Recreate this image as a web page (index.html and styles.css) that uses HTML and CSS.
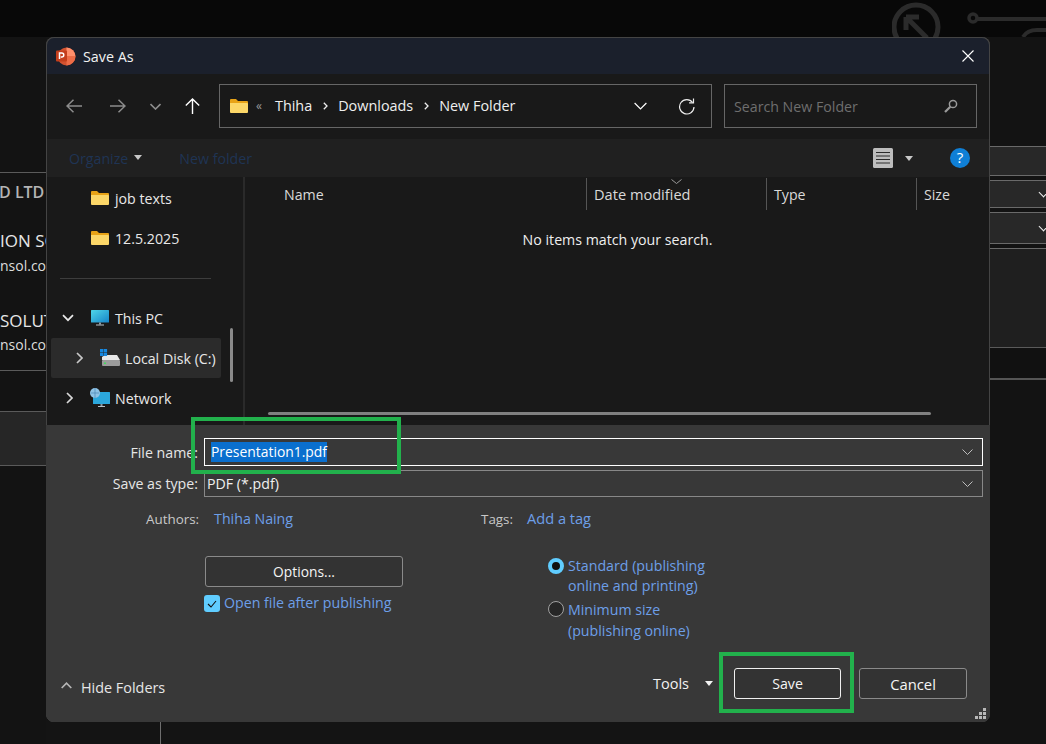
FILE: index.html
```html
<!DOCTYPE html>
<html lang="en">
<head>
<meta charset="utf-8">
<title>Save As</title>
<link rel="stylesheet" href="styles.css">
</head>
<body>
<div class="desktop">
  <header class="app-top">
    <svg class="app-logo" width="160" height="37" viewBox="0 0 160 37" fill="none" stroke="#2b2b2b">
      <circle cx="24" cy="27" r="22" stroke-width="5"/>
      <path d="M14 17v13M14 17h13M15 18l20 20" stroke-width="5"/>
      <circle cx="81" cy="18" r="4" stroke-width="3.5"/>
      <path d="M85 19h75" stroke-width="4"/>
      <path d="M131 37c3-5 8-7 14-7h15" stroke-width="4"/>
    </svg>
  </header>
  <div class="app-body">
    <aside class="app-left">
      <div class="left-head"></div>
      <div class="left-list">
        <div class="lt lt-gray lt-a">D LTD</div>
        <div class="lt lt-white lt-b">ION SOL</div>
        <div class="lt lt-small lt-c">nsol.com</div>
        <div class="lt lt-white lt-d">SOLUT</div>
        <div class="lt lt-small lt-e">nsol.com</div>
      </div>
      <div class="left-gap"></div>
      <div class="left-band"></div>
    </aside>
    <div class="app-mid"><div class="mid-line"></div></div>
    <aside class="app-right">
      <div class="r-gap r-g1"></div>
      <div class="r-field r-f1"></div>
      <div class="r-field r-f2"><span class="r-chev"></span></div>
      <div class="r-field r-f3"><span class="r-chev"></span></div>
      <div class="r-field r-f4"></div>
      <div class="r-f5"></div>
    </aside>
  </div>

  <section class="dialog">
    <div class="titlebar">
      <svg class="ppt" width="20" height="19" viewBox="0 0 20 19">
        <circle cx="10.5" cy="9.5" r="9" fill="#d35230"/>
        <path d="M10.5 .5a9 9 0 0 1 9 9h-9z" fill="#ff8f6b"/>
        <path d="M10.5 9.5h9a9 9 0 0 1-9 9z" fill="#ed6c47"/>
        <rect x="0" y="3.5" width="11" height="11" rx="1" fill="#c43e1c"/>
        <path d="M3.5 12V6h2.3a1.9 1.9 0 0 1 0 3.9H4.8" fill="none" stroke="#fff" stroke-width="1.5"/>
      </svg>
      <span class="title-text">Save As</span>
      <svg class="close" width="12" height="12" viewBox="0 0 12 12"><path d="M.5.5l11 11M11.5.5l-11 11" stroke="#fff" stroke-width="1.1"/></svg>
    </div>

    <div class="toolbar">
      <svg class="nav nav-back" width="16" height="14" viewBox="0 0 16 14" fill="none" stroke="#8c8c8c" stroke-width="1.5"><path d="M16 7H1M7.5.7L1 7l6.5 6.3"/></svg>
      <svg class="nav nav-fwd" width="16" height="14" viewBox="0 0 16 14" fill="none" stroke="#8c8c8c" stroke-width="1.5"><path d="M0 7h15M8.5.7L15 7l-6.500 6.300"/></svg>
      <svg class="nav nav-down" width="11" height="7" viewBox="0 0 11 7" fill="none" stroke="#8c8c8c" stroke-width="1.600"><path d="M.5 1l5 5 5-5"/></svg>
      <svg class="nav nav-up" width="15" height="16" viewBox="0 0 15 16" fill="none" stroke="#fff" stroke-width="1.400"><path d="M7.500 16V1M.8 7.500L7.500 1l6.700 6.500"/></svg>
      <div class="address">
        <svg class="folder" width="18" height="14" viewBox="0 0 18 14"><path d="M0 1a1 1 0 0 1 1-1h5l2 2h9a1 1 0 0 1 1 1v2H0z" fill="#e8a317"/><path d="M0 4h17a1 1 0 0 1 1 1v8a1 1 0 0 1-1 1H1a1 1 0 0 1-1-1z" fill="#fcd768"/></svg>
        <span class="dbl">«</span>
        <span class="crumb">Thiha</span>
        <svg class="crumb-sep" width="5" height="8" viewBox="0 0 5 8" fill="none" stroke="#eee" stroke-width="1.300"><path d="M.8.8L4 4 .8 7.200"/></svg>
        <span class="crumb">Downloads</span>
        <svg class="crumb-sep" width="5" height="8" viewBox="0 0 5 8" fill="none" stroke="#eee" stroke-width="1.300"><path d="M.8.8L4 4 .8 7.200"/></svg>
        <span class="crumb">New Folder</span>
        <svg class="addr-chev" width="13" height="8" viewBox="0 0 13 8" fill="none" stroke="#fff" stroke-width="1.200"><path d="M.6 1l5.900 6 5.900-6"/></svg>
        <svg class="refresh" width="17" height="17" viewBox="0 0 17 17" fill="none" stroke="#eee" stroke-width="1.200"><path d="M14.600 4.500A7.200 7.200 0 1 0 16 9"/><path d="M15.500 .5v4.400h-4.400"/></svg>
      </div>
      <div class="search">
        <span class="search-text">Search New Folder</span>
        <svg width="14" height="14" viewBox="0 0 14 14" fill="none" stroke="#9a9a9a" stroke-width="1.500"><circle cx="9" cy="5" r="3.600"/><path d="M6.300 7.700L1 13" stroke-width="2.200"/></svg>
      </div>
    </div>

    <div class="cmdbar">
      <span class="cmd-dim">Organize</span>
      <span class="caret cmd-caret"></span>
      <span class="cmd-dim cmd-new">New folder</span>
      <svg class="view" width="20" height="20" viewBox="0 0 20 20"><rect width="20" height="20" rx="1.500" fill="#bdbdbd"/><path d="M3 4.500h14M3 8h14M3 11.500h14M3 15h14" stroke="#2b2b2b"/></svg>
      <span class="caret view-caret"></span>
      <svg class="help" width="20" height="20" viewBox="0 0 20 20"><circle cx="10" cy="10" r="10" fill="#0f7fd6"/><text x="10" y="15" text-anchor="middle" class="help-q">?</text></svg>
    </div>

    <div class="browser">
      <nav class="tree">
        <div class="tree-list">
          <div class="row row-l2"><svg class="folder" width="18" height="14" viewBox="0 0 18 14"><path d="M0 1a1 1 0 0 1 1-1h5l2 2h9a1 1 0 0 1 1 1v2H0z" fill="#e8a317"/><path d="M0 4h17a1 1 0 0 1 1 1v8a1 1 0 0 1-1 1H1a1 1 0 0 1-1-1z" fill="#fcd768"/></svg><span>job texts</span></div>
          <div class="row row-l2"><svg class="folder" width="18" height="14" viewBox="0 0 18 14"><path d="M0 1a1 1 0 0 1 1-1h5l2 2h9a1 1 0 0 1 1 1v2H0z" fill="#e8a317"/><path d="M0 4h17a1 1 0 0 1 1 1v8a1 1 0 0 1-1 1H1a1 1 0 0 1-1-1z" fill="#fcd768"/></svg><span>12.5.2025</span></div>
          <div class="row-sep"><hr></div>
          <div class="row row-top">
            <svg class="tw-open" width="12" height="8" viewBox="0 0 12 8" fill="none" stroke="#e8e8e8" stroke-width="1.700"><path d="M1 1.200l5 5 5-5"/></svg>
            <svg class="pc" width="18" height="16" viewBox="0 0 18 16"><defs><linearGradient id="pcg" x1="0" y1="0" x2="1" y2="1"><stop offset="0" stop-color="#4fd6e8"/><stop offset="1" stop-color="#1684c9"/></linearGradient></defs><rect width="18" height="12.500" rx=".5" fill="url(#pcg)"/><rect x="8" y="12.500" width="2" height="2" fill="#8a9aa5"/><rect x="5" y="14.500" width="8" height="1" fill="#b9c2c8"/></svg>
            <span>This PC</span>
          </div>
          <div class="row row-sel">
            <svg class="tw" width="7" height="12" viewBox="0 0 7 12" fill="none" stroke="#c8c8c8" stroke-width="1.700"><path d="M1 1l5 5-5 5"/></svg>
            <svg class="disk" width="20" height="18" viewBox="0 0 20 18"><path d="M2 8l3-2h12l3 5H2z" fill="#e8e8e8"/><rect x="2" y="11" width="18" height="6" rx="1" fill="#9b9b9b"/><rect x="4" y="13.500" width="2" height="1.500" fill="#3fdc5a"/><path d="M0 0h3.300v3.300H0zM3.800 0h3.300v3.300H3.800zM0 3.800h3.300v3.300H0zM3.800 3.800h3.300v3.300H3.800z" fill="#1788e0"/></svg>
            <span>Local Disk (C:)</span>
          </div>
          <div class="row row-top">
            <svg class="tw tw-net" width="7" height="12" viewBox="0 0 7 12" fill="none" stroke="#d8d8d8" stroke-width="1.700"><path d="M1 1l5 5-5 5"/></svg>
            <svg class="net" width="20" height="20" viewBox="0 0 20 20"><rect x="3" y="4" width="17" height="12" rx=".5" fill="#2ba7dc"/><rect x="10.500" y="16" width="2" height="2" fill="#8a9aa5"/><rect x="8" y="18" width="7" height="1" fill="#b9c2c8"/><circle cx="5" cy="5" r="5" fill="#8fc3e6"/><path d="M1 5h8M5 0v10" stroke="#4b86b5" stroke-width=".7"/></svg>
            <span>Network</span>
          </div>
        </div>
        <div class="tree-scroll"></div>
      </nav>
      <div class="pane">
        <div class="cols">
          <span class="col col-name">Name</span>
          <span class="col col-date">Date modified<svg class="sort" width="11" height="5" viewBox="0 0 11 5" fill="none" stroke="#9a9a9a"><path d="M.5.5l5 4 5-4"/></svg></span>
          <span class="col col-type">Type</span>
          <span class="col col-size">Size</span>
        </div>
        <p class="empty">No items match your search.</p>
        <div class="hscroll"></div>
      </div>
    </div>

    <div class="form">
      <div class="field">
        <label class="f-label">File name:</label>
        <div class="combo combo-focus"><span class="sel">Presentation1.pdf</span><svg class="combo-chev" width="11" height="6" viewBox="0 0 11 6" fill="none" stroke="#bdbdbd"><path d="M.5.5l5 5 5-5"/></svg></div>
      </div>
      <div class="field field-2">
        <label class="f-label">Save as type:</label>
        <div class="combo combo-type"><span>PDF (*.pdf)</span><svg class="combo-chev" width="11" height="6" viewBox="0 0 11 6" fill="none" stroke="#bdbdbd"><path d="M.5.5l5 5 5-5"/></svg></div>
      </div>
      <div class="meta">
        <span class="meta-label">Authors:</span><span class="link link-author">Thiha Naing</span>
        <span class="meta-label meta-tags">Tags:</span><span class="link link-tag">Add a tag</span>
      </div>
      <div class="opts">
        <div class="opts-left">
          <button class="btn btn-options">Options...</button>
          <div class="check"><span class="box"><svg width="10" height="8" viewBox="0 0 10 8" fill="none" stroke="#111" stroke-width="1.100"><path d="M1 4l3 3 5-6"/></svg></span><span class="link">Open file after publishing</span></div>
        </div>
        <div class="opts-right">
          <div class="radio"><span class="dot dot-on"></span><span class="link">Standard (publishing<br>online and printing)</span></div>
          <div class="radio radio-2"><span class="dot"></span><span class="link">Minimum size<br>(publishing online)</span></div>
        </div>
      </div>
      <div class="actions">
        <svg class="hide-chev" width="11" height="7" viewBox="0 0 11 7" fill="none" stroke="#b5b5b5" stroke-width="1.700"><path d="M.7 6l4.800-4.800L10.300 6"/></svg>
        <span class="hide-text">Hide Folders</span>
        <span class="tools">Tools</span>
        <span class="caret tools-caret"></span>
        <button class="btn btn-save">Save</button>
        <button class="btn btn-cancel">Cancel</button>
      </div>
      <svg class="grip" width="12" height="12" viewBox="0 0 12 12" fill="#b8b8b8"><path d="M8 0h3v3H8zM4 4h3v3H4zM8 4h3v3H8zM0 8h3v3H0zM4 8h3v3H4zM8 8h3v3H8z"/></svg>
    </div>

    <div class="mark mark-name"></div>
    <div class="mark mark-save"></div>
  </section>
</div>
</body>
</html>
```

FILE: styles.css
```css
* { box-sizing: border-box; }
html, body { margin: 0; height: 100%; }
body { background: #141414; font-family: "Open Sans", "Noto Sans", sans-serif; font-size: 14.2px; color: #eee; overflow: hidden; }

.desktop { position: relative; width: 1046px; height: 744px; overflow: hidden; display: flex; flex-direction: column; }

/* background application */
.app-top { height: 37px; background: #080808; flex: none; display: flex; justify-content: flex-end; overflow: hidden; }
.app-logo { flex: none; margin-right: -6px; }
.app-body { flex: 1; display: flex; }
.app-left { width: 46px; flex: none; overflow: hidden; display: flex; flex-direction: column; background: #131313; }
.left-head { height: 136px; border-bottom: 1px solid #5a5a5a; flex: none; }
.left-list { height: 198px; border-bottom: 1px solid #5a5a5a; flex: none; overflow: hidden; }
.lt { white-space: nowrap; }
.lt-gray { font-size: 16px; font-weight: 600; color: #b4b4b4; line-height: 22px; margin: 8px 0 0 -1px; }
.lt-white { font-size: 17px; color: #e6e6e6; line-height: 22px; }
.lt-small { font-size: 14px; color: #ddd; line-height: 20px; }
.lt-b { margin: 27px 0 0 0; }
.lt-c { margin: 4px 0 0 0; }
.lt-d { margin: 34px 0 0 0; }
.lt-e { margin: 3px 0 0 0; }
.left-gap { height: 41px; border-bottom: 1px solid #5a5a5a; flex: none; }
.left-band { height: 54px; background: #262626; border-bottom: 1px solid #5a5a5a; flex: none; }
.app-mid { flex: 1; display: flex; align-items: flex-end; }
.mid-line { width: 1px; height: 22px; background: #6e6e6e; margin-left: 114px; }
.app-right { width: 56px; flex: none; display: flex; flex-direction: column; background: #131313; }
.r-g1 { height: 109px; flex: none; }
.r-field { background: #282828; border-top: 1px solid #6a6a6a; border-bottom: 1px solid #6a6a6a; flex: none; position: relative; display: flex; align-items: center; justify-content: flex-end; }
.r-f1 { height: 30px; margin-bottom: 4px; }
.r-f2 { height: 28px; margin-bottom: 4px; }
.r-f3 { height: 32px; margin-bottom: 4px; }
.r-f4 { height: 100px; border-bottom: 1px solid #5a5a5a; background: #1f1f1f; }
.r-f5 { height: 32px; border-bottom: 2px solid #555; background: #111; flex: none; }
.r-chev { width: 7px; height: 7px; border-right: 1.500px solid #eee; border-bottom: 1.500px solid #eee; transform: rotate(45deg); margin: -3px -1px 0 0; }

/* dialog window */
.dialog { position: absolute; left: 46px; top: 37px; width: 944px; height: 685px; border-radius: 8px; overflow: hidden; display: flex; flex-direction: column; background: #383838; box-shadow: inset 0 0 0 1px #444; }

.titlebar { height: 37px; flex: none; background: #1b202c; border-top: 1px solid #444; border-left: 1px solid #444; border-right: 1px solid #444; display: flex; align-items: center; padding: 0 15px 0 9px; border-radius: 8px 8px 0 0; }
.ppt { flex: none; }
.title-text { margin-left: 7px; font-size: 14.3px; color: #f2f2f2; }
.close { margin-left: auto; }

.toolbar { height: 65px; flex: none; background: #191919; border-left: 1px solid #444; border-right: 1px solid #444; display: flex; align-items: center; padding: 0 12px 0 19px; }
.nav { flex: none; margin-top: -1px; }
.nav-fwd { margin-left: 28px; }
.nav-down { margin-left: 24px; }
.nav-up { margin-left: 24px; }
.address { margin-left: 19px; width: 493px; height: 44px; margin-top: -1px; border: 1px solid #666; display: flex; align-items: center; padding: 0 16px 0 10px; font-size: 14.4px; }
.dbl { margin-left: 8px; color: #9a9a9a; font-size: 12px; margin-top: -2px; }
.crumb { color: #efefef; margin-top: -2px; }
.address .dbl + .crumb { margin-left: 13px; }
.crumb-sep { margin: 0 10px 0 11px; flex: none; }
.addr-chev { margin-left: auto; }
.refresh { margin-left: 31px; }
.search { margin-left: 12px; width: 253px; height: 44px; margin-top: -1px; border: 1px solid #666; display: flex; align-items: center; justify-content: space-between; padding: 0 18px 0 9px; }
.search-text { color: #6e6e6e; font-size: 14.2px; }

.cmdbar { height: 38px; flex: none; background: #202020; border-left: 1px solid #444; border-right: 1px solid #444; display: flex; align-items: center; padding: 0 19px 0 22px; }
.cmd-dim { color: #1f3454; font-size: 14.2px; }
.cmd-new { margin-left: 37px; }
.caret { width: 0; height: 0; border-left: 4.500px solid transparent; border-right: 4.500px solid transparent; border-top: 5px solid #c8c8c8; flex: none; }
.cmd-caret { margin-left: 6px; margin-top: -1px; }
.view { margin-left: auto; margin-right: 1px; }
.view-caret { margin-left: 11px; margin-right: 37px; }
.help-q { font-size: 15px; fill: #fff; font-family: "Open Sans", sans-serif; }

.browser { height: 248px; flex: none; background: #191919; border-left: 1px solid #444; border-right: 1px solid #444; display: flex; }
.tree { width: 197px; flex: none; display: flex; position: relative; border-right: 1px solid #2a2a2a; }
.tree-list { width: 174px; flex: none; padding: 1px 0 0 4px; }
.row { height: 40px; display: flex; align-items: center; color: #e8e8e8; white-space: nowrap; }
.row-l2 { padding-left: 40px; }
.row-l2 .folder { margin-right: 6px; }
.row-sep { height: 40px; display: flex; align-items: center; padding: 0 10px 0 9px; }
.row-sep hr { width: 100%; height: 1px; border: 0; background: #3d3d3d; margin: 0; }
.row-top { padding-left: 11px; }
.tw { flex: none; }
.tw-open { flex: none; }
.tw-net { margin-left: 4px; }
.pc { margin-left: 17px; margin-right: 6px; flex: none; }
.row-top .net { margin-left: 17px; margin-right: 5px; flex: none; }
.row-sel { background: #2b2b2b; border-radius: 2px; padding-left: 25px; }
.disk { margin-left: 17px; margin-right: 5px; flex: none; }
.tree-scroll { position: absolute; right: 10px; top: 151px; width: 3px; height: 54px; background: #8a8a8a; border-radius: 2px; }

.pane { flex: 1; position: relative; display: flex; flex-direction: column; border-left: 1px solid #2a2a2a; margin-left: 0; }
.cols { height: 32px; display: flex; flex: none; margin-top: 1px; }
.col { display: flex; align-items: center; color: #d9d9d9; padding-left: 7px; position: relative; border-left: 1px solid #555; }
.col-name { width: 341px; padding-left: 39px; border-left: 0; }
.col-date { width: 180px; font-size: 14.6px; }
.col-type { width: 150px; }
.col-size { flex: 1; }
.sort { position: absolute; left: 84px; top: 1px; }
.empty { margin: 20px 0 0; color: #efefef; text-align: center; width: 745px; }
.hscroll { position: absolute; left: 23px; top: 235px; width: 663px; height: 3px; background: #808080; border-radius: 2px; }

.form { flex: 1; position: relative; background: #383838; padding: 13px 7px 0 0; display: flex; flex-direction: column; }
.field { display: flex; align-items: center; }
.field-2 { margin-top: 4px; }
.f-label { width: 152px; text-align: right; color: #e6e6e6; margin-right: 6px; }
.combo { flex: 1; height: 28px; display: flex; align-items: center; justify-content: space-between; padding: 0 9px 0 6px; color: #f0f0f0; }
.combo-focus { border: 1px solid #fff; }
.combo-type { border: 1px solid #888; height: 27px; padding-left: 2px; }
.sel { background: #0a6fce; color: #fff; height: 20px; line-height: 19px; display: block; font-size: 13.9px; }
.meta { display: flex; margin-top: 12px; height: 20px; align-items: center; padding-left: 100px; }
.meta-label { color: #c8c8c8; font-size: 13.4px; }
.link { color: #6d9fe8; }
.link-author { margin-left: 15px; margin-top: -2px; }
.link-tag { font-size: 14.6px; margin-top: -2px; }
.meta-tags { margin-left: 188px; margin-right: 14px; }
.opts { display: flex; margin-top: 27px; }
.opts-left { margin-left: 159px; width: 198px; flex: none; }
.btn { font: inherit; background: #333; color: #f5f5f5; border: 1px solid #8a8a8a; border-radius: 3px; padding: 0; }
.btn-options { width: 198px; height: 31px; display: block; background: #333; font-size: 13.8px; }
.check { display: flex; align-items: center; margin-top: 8px; margin-left: -1px; white-space: nowrap; }
.check .link { margin-top: -2px; }
.box { width: 16px; height: 17px; background: #60cdff; border-radius: 3px; display: flex; align-items: center; justify-content: center; margin-right: 4px; flex: none; }
.opts-right { margin-left: 145px; }
.radio { display: flex; align-items: flex-start; line-height: 20px; }
.radio-2 { margin-top: 3px; line-height: 21px; }
.dot { width: 16px; height: 16px; border-radius: 50%; border: 1px solid #a0a0a0; background: #262626; margin-top: 2px; margin-right: 4px; flex: none; }
.dot-on { background: #111; border: 4.500px solid #60cdff; }
.actions { display: flex; align-items: center; height: 31px; position: absolute; left: 15px; right: 23px; bottom: 23px; }
.hide-chev { margin-top: 4px; }
.hide-text { margin-left: 9px; margin-top: 8px; color: #e6e6e6; font-size: 14.4px; }
.tools { margin-left: auto; color: #f2f2f2; font-size: 14.5px; }
.tools-caret { margin-left: 16px; border-top-color: #f2f2f2; }
.btn-save { width: 107px; height: 31px; margin-left: 21px; border-color: #f0f0f0; }
.btn-cancel { width: 108px; height: 31px; margin-left: 18px; font-size: 14.8px; line-height: 26px; }
.grip { position: absolute; right: 3px; bottom: 2px; }

.mark { position: absolute; border: 4px solid #22b14c; pointer-events: none; }
.mark-name { left: 145px; top: 380px; width: 210px; height: 57px; }
.mark-save { left: 673px; top: 615px; width: 135px; height: 61px; }
```
